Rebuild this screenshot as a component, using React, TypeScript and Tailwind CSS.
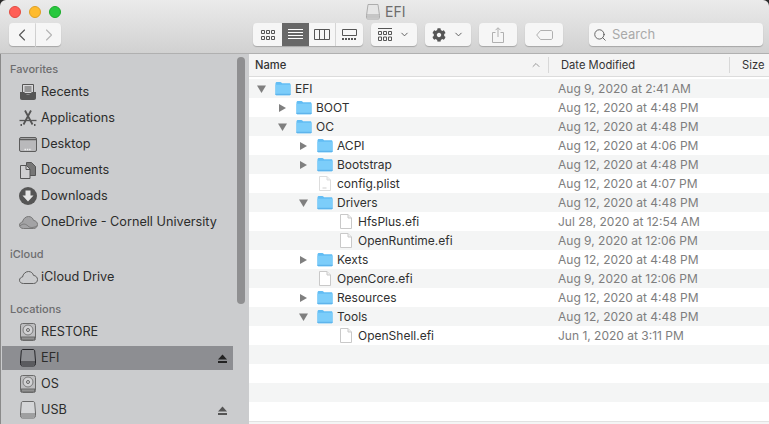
import { ChevronLeft, ChevronRight, ChevronDown, ChevronUp, Search } from 'lucide-react'
import { FaCog } from 'react-icons/fa'
import type { ReactNode } from 'react'

type Arrow = 'open' | 'closed' | 'none'
type Kind = 'folder' | 'file' | 'plist'

interface Row {
  name: string
  depth: number
  arrow: Arrow
  kind: Kind
  date: string
}

const ROWS: Row[] = [
  { name: 'EFI', depth: 0, arrow: 'open', kind: 'folder', date: 'Aug 9, 2020 at 2:41 AM' },
  { name: 'BOOT', depth: 1, arrow: 'closed', kind: 'folder', date: 'Aug 12, 2020 at 4:48 PM' },
  { name: 'OC', depth: 1, arrow: 'open', kind: 'folder', date: 'Aug 12, 2020 at 4:48 PM' },
  { name: 'ACPI', depth: 2, arrow: 'closed', kind: 'folder', date: 'Aug 12, 2020 at 4:06 PM' },
  { name: 'Bootstrap', depth: 2, arrow: 'closed', kind: 'folder', date: 'Aug 12, 2020 at 4:48 PM' },
  { name: 'config.plist', depth: 2, arrow: 'none', kind: 'plist', date: 'Aug 12, 2020 at 4:07 PM' },
  { name: 'Drivers', depth: 2, arrow: 'open', kind: 'folder', date: 'Aug 12, 2020 at 4:48 PM' },
  { name: 'HfsPlus.efi', depth: 3, arrow: 'none', kind: 'file', date: 'Jul 28, 2020 at 12:54 AM' },
  { name: 'OpenRuntime.efi', depth: 3, arrow: 'none', kind: 'file', date: 'Aug 9, 2020 at 12:06 PM' },
  { name: 'Kexts', depth: 2, arrow: 'closed', kind: 'folder', date: 'Aug 12, 2020 at 4:48 PM' },
  { name: 'OpenCore.efi', depth: 2, arrow: 'none', kind: 'file', date: 'Aug 9, 2020 at 12:06 PM' },
  { name: 'Resources', depth: 2, arrow: 'closed', kind: 'folder', date: 'Aug 12, 2020 at 4:48 PM' },
  { name: 'Tools', depth: 2, arrow: 'open', kind: 'folder', date: 'Aug 12, 2020 at 4:48 PM' },
  { name: 'OpenShell.efi', depth: 3, arrow: 'none', kind: 'file', date: 'Jun 1, 2020 at 3:11 PM' },
  { name: '', depth: 0, arrow: 'none', kind: 'file', date: '' },
  { name: '', depth: 0, arrow: 'none', kind: 'file', date: '' },
  { name: '', depth: 0, arrow: 'none', kind: 'file', date: '' },
  { name: '', depth: 0, arrow: 'none', kind: 'file', date: '' },
]

const INDENT = ['pl-[8px]', 'pl-[29px]', 'pl-[50px]', 'pl-[71px]']

function FolderIcon() {
  return (
    <svg width="16" height="15" viewBox="0 0 17 15" className="shrink-0">
      <path d="M.5 2.2C.5 1.2 1.2.5 2 .5h3.6c.7 0 1 .3 1.4.8l.6.7h7.600c.9 0 1.300.6 1.300 1.400v10c0 .9-.5 1.300-1.300 1.300H1.800C1 14.700.5 14.300.5 13.400z" fill="#62bdf4" />
      <path d="M.5 3.600h16v9.800c0 .9-.5 1.300-1.300 1.300H1.800C1 14.700.5 14.300.5 13.400z" fill="#7ccdfa" />
      <path d="M.5 13.700h16" stroke="#55ade8" strokeWidth="1" />
    </svg>
  )
}

function FileIcon({ plist }: { plist?: boolean }) {
  return (
    <svg width="12" height="15" viewBox="0 0 12 15" className="shrink-0">
      <path d="M.5.5h7.500l3.500 3.500v10.500H.5z" fill="#fff" stroke={plist ? '#dddddd' : '#c9c9c9'} />
      <path d="M8 .5v3.500h3.500" fill="#f0f0f0" stroke={plist ? '#dddddd' : '#c9c9c9'} />
      {plist && <path d="M3.500 12h4" stroke="#cfcfcf" strokeWidth="1" />}
    </svg>
  )
}

function Disclosure({ arrow }: { arrow: Arrow }) {
  if (arrow === 'none') return <span className="w-[18px] shrink-0" />
  return (
    <span className="mr-[9px] flex w-[9px] shrink-0 justify-center">
      {arrow === 'open' ? (
        <svg width="9" height="8" viewBox="0 0 9 8"><path d="M0 .5h9L4.500 8z" fill="#7f7f7f" /></svg>
      ) : (
        <svg width="7" height="8" viewBox="0 0 7 8"><path d="M0 0l7 4-7 4z" fill="#7f7f7f" /></svg>
      )}
    </span>
  )
}

function FileRow({ row, index }: { row: Row; index: number }) {
  const bg = index % 2 === 0 ? 'bg-[#f4f5f5]' : 'bg-white'
  return (
    <div className={`flex h-[19px] items-center ${bg} text-[12px]`}>
      <div className={`flex w-[299px] shrink-0 items-center ${INDENT[row.depth]} text-[#303030]`}>
        {row.name && (
          <>
            <Disclosure arrow={row.arrow} />
            {row.kind === 'folder' ? (
              <FolderIcon />
            ) : (
              <span className="flex w-[16px] justify-center">
                <FileIcon plist={row.kind === 'plist'} />
              </span>
            )}
            <span className="ml-[4px] pt-px">{row.name}</span>
          </>
        )}
      </div>
      <div className="pt-px pl-[10px] text-[#7e7e7e]">{row.date}</div>
    </div>
  )
}

function DriveIcon({ dark }: { dark?: boolean }) {
  const c = dark ? '#26262a' : '#6a6a6a'
  return (
    <svg width="16" height="18" viewBox="0 0 16 18">
      <path d="M3 .5h10c1 0 1.500.5 1.700 1.500l.8 10v2.500c0 1.500-.8 2.500-2 2.500h-11c-1.200 0-2-1-2-2.500V12l.8-10C1.500 1 2 .5 3 .5z" fill={dark ? '#8f9094' : '#d4d5d7'} stroke={c} />
      <path d="M.5 13h15M.5 15h15" stroke={c} />
    </svg>
  )
}

function HardDiskIcon() {
  return (
    <svg width="16" height="18" viewBox="0 0 16 18">
      <rect x=".5" y=".5" width="15" height="17" rx="2" fill="#bdbdbf" stroke="#6a6a6a" />
      <circle cx="8" cy="7" r="5" fill="#d2d2d4" stroke="#7a7a7a" />
      <circle cx="8" cy="7" r="1.500" fill="none" stroke="#666" />
      <rect x="1" y="13.500" width="14" height="3.500" fill="#6a6a6a" />
      <path d="M3 14.500v2M5 14.500v2M7 14.500v2M9 14.500v2M11 14.500v2M13 14.500v2" stroke="#b8b8b8" />
    </svg>
  )
}

function RecentsIcon() {
  return (
    <svg width="16" height="16" viewBox="0 0 16 16">
      <path d="M2.500.5h11v9h-11z" fill="#d8d8da" stroke="#555" />
      <path d="M4.500 3h7M4.500 5h7M4.500 7h7" stroke="#555" />
      <path d="M0 8h4.500c0 1.500 1 2.500 3.500 2.500s3.500-1 3.500-2.500H16v6c0 1.200-.8 2-2 2H2c-1.200 0-2-.8-2-2z" fill="#555" />
    </svg>
  )
}

function AppsIcon() {
  return (
    <svg width="18" height="17" viewBox="0 0 18 17" fill="none" stroke="#555">
      <path d="M6 .5l7.500 14M12 .5L4.500 14.500" strokeWidth="1.800" />
      <path d="M.5 10.500h17" strokeWidth="1.300" />
      <path d="M1.500 15h1.500M15 15h1.500" strokeWidth="1.800" />
    </svg>
  )
}

function DesktopIcon() {
  return (
    <svg width="18" height="15" viewBox="0 0 18 15">
      <rect x=".5" y=".5" width="17" height="14" rx="1.500" fill="#b9b9bb" stroke="#5c5c5c" />
      <path d="M1 2.500h16" stroke="#5c5c5c" strokeWidth="1.500" />
      <path d="M5.500 12.500h7" stroke="#eeeeee" strokeWidth="1.500" strokeDasharray="1.500 .8" />
    </svg>
  )
}

function DocumentsIcon() {
  return (
    <svg width="16" height="17" viewBox="0 0 16 17" fill="#cfcfd1" stroke="#555">
      <path d="M6.500.5h5l4 4v9h-9z" fill="#777" />
      <path d="M.5 3.500h6l3.500 3.500v9.500H.5z" />
      <path d="M6 3.500V7.500h4" fill="none" />
    </svg>
  )
}

function DownloadsIcon() {
  return (
    <svg width="18" height="18" viewBox="0 0 18 18">
      <circle cx="9" cy="9" r="9" fill="#555" />
      <path d="M6.500 3.500h5v5h3L9 14.500 3.500 8.500h3z" fill="#e6e6e6" />
    </svg>
  )
}

function CloudIcon({ filled }: { filled?: boolean }) {
  return (
    <svg width="19" height="13" viewBox="0 0 19 13">
      <path
        d="M4.500 12.500C2 12.500.5 11 .5 9.200c0-1.700 1.300-3 3-3.200C4 3 6.500.5 9.500.5c2.600 0 4.500 1.700 5 3.900 2.300.2 4 2 4 4.100 0 2.300-1.700 4-4 4z"
        fill={filled ? '#a3a3a5' : 'none'}
        stroke={filled ? '#777' : '#5f5f5f'}
      />
      {filled && <path d="M1 10c3-3 6-2 8 0s5 2 9 0" fill="none" stroke="#7a7a7a" />}
    </svg>
  )
}

function Eject({ dark }: { dark?: boolean }) {
  const c = dark ? 'fill-[#222]' : 'fill-[#555]'
  return (
    <svg width="9" height="9" viewBox="0 0 9 9" className="mr-[6px] ml-auto">
      <path d="M4.500.5L9 5.500H0z" className={c} />
      <rect y="7" width="9" height="2" className={c} />
    </svg>
  )
}

function SideLabel({ children, className = '' }: { children: ReactNode; className?: string }) {
  return <div className={`pl-[8px] text-[11px] font-medium leading-[14px] text-[#6d6d6f] ${className}`}>{children}</div>
}

function SideItem({ icon, label, selected, eject }: { icon: ReactNode; label: string; selected?: boolean; eject?: boolean }) {
  return (
    <div className={`flex h-[24px] w-[231px] shrink-0 items-center ${selected ? 'bg-[#8d8e92]' : ''}`}>
      <span className="ml-[16px] flex w-[20px] shrink-0 justify-center">{icon}</span>
      <span className="ml-[3px] text-[12.7px] text-[#2c2c2c]">{label}</span>
      {eject && <Eject dark={selected} />}
    </div>
  )
}

function ToolButton({ className = '', children }: { className?: string; children?: ReactNode }) {
  return (
    <div className={`flex h-[23px] items-center justify-center rounded-[4px] bg-[#f6f6f6] shadow-[0_1px_1px_rgba(0,0,0,0.22)] ${className}`}>
      {children}
    </div>
  )
}

function Toolbar() {
  return (
    <div className="flex h-[53px] flex-col rounded-t-[6px] bg-gradient-to-b from-[#ebebeb] to-[#d1d1d1]">
      <div className="flex h-[23px] items-center pl-[9px]">
        <span className="h-[12px] w-[12px] rounded-full border border-[#e24b41] bg-[#ff5f57]" />
        <span className="ml-[8px] h-[12px] w-[12px] rounded-full border border-[#dfa023] bg-[#febb2e]" />
        <span className="ml-[8px] h-[12px] w-[12px] rounded-full border border-[#1aab29] bg-[#28c83f]" />
        <span className="ml-[305px] flex items-center">
          <svg width="14" height="16" viewBox="0 0 14 16">
            <path d="M2 .5h10l1.500 11v2c0 1-.6 1.500-1.500 1.500H2c-.9 0-1.500-.5-1.500-1.500v-2z" fill="#e6e6e6" stroke="#adadad" />
            <path d="M.5 11h13M.5 13h13" stroke="#a5a5a5" />
          </svg>
          <span className="ml-[5px] text-[14px] leading-none text-[#6d6d6d]">EFI</span>
        </span>
      </div>
      <div className="flex items-center pl-[9px]">
        <ToolButton className="w-[26px] rounded-r-none">
          <ChevronLeft className="h-[20px] w-[20px] text-[#555]" strokeWidth={1.300} />
        </ToolButton>
        <ToolButton className="ml-px w-[25px] rounded-l-none">
          <ChevronRight className="h-[20px] w-[20px] text-[#b4b4b4]" strokeWidth={1.300} />
        </ToolButton>
        <ToolButton className="ml-[192px] w-[110px] items-stretch overflow-hidden">
          <span className="flex w-[29px] items-center justify-center">
            <svg width="14" height="12" viewBox="0 0 14 12" fill="none" stroke="#555">
              <path d="M.5 1.500h3v3h-3zM5.500 1.500h3v3h-3zM10.500 1.500h3v3h-3zM.5 7.500h3v3h-3zM5.500 7.500h3v3h-3zM10.500 7.500h3v3h-3z" />
            </svg>
          </span>
          <span className="flex w-[27px] items-center justify-center bg-[#686868]">
            <svg width="15" height="11" viewBox="0 0 15 11" stroke="#fff"><path d="M0 .5h15M0 3.500h15M0 6.500h15M0 9.500h15" /></svg>
          </span>
          <span className="flex w-[27px] items-center justify-center border-r border-[#d5d5d5]">
            <svg width="16" height="11" viewBox="0 0 16 11" fill="none" stroke="#555"><path d="M.5.500h15v10H.5zM5.500.500v10M10.500.500v10" /></svg>
          </span>
          <span className="flex w-[27px] items-center justify-center">
            <svg width="15" height="11" viewBox="0 0 15 11" fill="none" stroke="#555"><path d="M.5.500h14v6H.5z" /><path d="M0 10h15" strokeWidth="2" strokeDasharray="2 1" /></svg>
          </span>
        </ToolButton>
        <ToolButton className="ml-[8px] w-[46px] gap-[7px]">
          <svg width="14" height="13" viewBox="0 0 14 13" fill="none" stroke="#555">
            <path d="M0 .5h14" />
            <path d="M.5 3.500h3v3h-3zM5.500 3.500h3v3h-3zM10.500 3.500h3v3h-3zM.5 9h3v3.500h-3zM5.500 9h3v3.500h-3zM10.500 9h3v3.500h-3z" />
          </svg>
          <ChevronDown className="h-[11px] w-[11px] text-[#555]" strokeWidth={2} />
        </ToolButton>
        <ToolButton className="ml-[8px] w-[46px] gap-[7px]">
          <FaCog className="h-[14px] w-[14px] text-[#555]" />
          <ChevronDown className="h-[11px] w-[11px] text-[#555]" strokeWidth={2} />
        </ToolButton>
        <ToolButton className="ml-[8px] w-[38px]">
          <svg width="12" height="16" viewBox="0 0 12 16" fill="none" stroke="#b0b0b0">
            <path d="M3.500 5.500H.5v10h11v-10H8.500M6 10V1M3.500 3.200L6 .7l2.500 2.500" />
          </svg>
        </ToolButton>
        <ToolButton className="ml-[8px] w-[38px]">
          <svg width="17" height="10" viewBox="0 0 17 10" fill="none" stroke="#b0b0b0">
            <path d="M4.500.5h10.500c.8 0 1.500.7 1.500 1.500v6c0 .8-.7 1.500-1.500 1.500H4.500L.7 5z" />
          </svg>
        </ToolButton>
        <ToolButton className="ml-[26px] w-[174px] justify-start pl-[4px]">
          <Search className="h-[14px] w-[14px] text-[#555]" strokeWidth={1.500} />
          <span className="ml-[5px] text-[13px] text-[#a9a9a9]">Search</span>
        </ToolButton>
      </div>
    </div>
  )
}

function Sidebar() {
  return (
    <aside className="relative flex h-full w-[249px] shrink-0 flex-col overflow-hidden bg-[#cbccce] pt-[8px] pl-[2px] shadow-[inset_1px_0_0_#8a8a8a]">
      <SideLabel>Favorites</SideLabel>
      <div className="mt-[4px] flex flex-col gap-[2px]">
        <SideItem icon={<RecentsIcon />} label="Recents" />
        <SideItem icon={<AppsIcon />} label="Applications" />
        <SideItem icon={<DesktopIcon />} label="Desktop" />
        <SideItem icon={<DocumentsIcon />} label="Documents" />
        <SideItem icon={<DownloadsIcon />} label="Downloads" />
        <SideItem icon={<CloudIcon filled />} label="OneDrive - Cornell University" />
      </div>
      <SideLabel className="mt-[13px]">iCloud</SideLabel>
      <div className="mt-[4px]">
        <SideItem icon={<CloudIcon />} label="iCloud Drive" />
      </div>
      <SideLabel className="mt-[13px]">Locations</SideLabel>
      <div className="mt-[4px] flex flex-col gap-[2px]">
        <SideItem icon={<HardDiskIcon />} label="RESTORE" />
        <SideItem icon={<DriveIcon dark />} label="EFI" selected eject />
        <SideItem icon={<HardDiskIcon />} label="OS" />
        <SideItem icon={<DriveIcon />} label="USB" eject />
      </div>
      {/* scrollbar thumb */}
      <div className="absolute top-[3px] left-[237px] h-[247px] w-[8px] rounded-full bg-[#8f8f91]" />
    </aside>
  )
}

function FileList() {
  return (
    <main className="flex min-w-0 flex-1 flex-col bg-white">
      <div className="flex h-[23px] shrink-0 items-center border-b border-[#dcdcdc] bg-[#f4f4f4] text-[11.2px] text-[#333]">
        <div className="flex w-[300px] shrink-0 items-center justify-between border-r border-[#d8d8d8] pr-[6px] pl-[6px] font-medium">
          <span>Name</span>
          <ChevronUp className="h-[12px] w-[12px] text-[#9a9a9a]" strokeWidth={2} />
        </div>
        <div className="w-[181px] shrink-0 border-r border-[#d8d8d8] pl-[12px]">Date Modified</div>
        <div className="pl-[12px]">Size</div>
      </div>
      <div className="mt-[2px] flex flex-col">
        {ROWS.map((row, i) => (
          <FileRow key={i} row={row} index={i} />
        ))}
      </div>
      <div className="h-[3px] border-t border-[#e2e2e2] bg-[#f4f5f5]" />
    </main>
  )
}

export default function App() {
  return (
    <div className="h-[424px] w-[769px] overflow-hidden bg-[#2a2a2a] font-['Inter','Liberation_Sans',sans-serif]">
      <Toolbar />
      <div className="flex h-[371px] border-t border-[#b0b0b0]">
        <Sidebar />
        <FileList />
      </div>
    </div>
  )
}
